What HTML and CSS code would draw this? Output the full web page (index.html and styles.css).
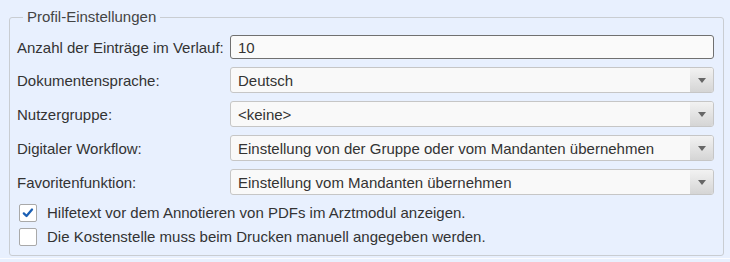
FILE: index.html
```html
<!DOCTYPE html>
<html lang="de">
	<head>
		<meta charset="UTF-8" />
		<meta name="viewport" content="width=device-width, initial-scale=1.0" />
		<title>Profil-Einstellungen</title>
		<link rel="stylesheet" href="styles.css">
	</head>
	<body>
		<div class="page">
			<fieldset class="profile">
				<legend>Profil-Einstellungen</legend>

				<div class="form-grid">
					<label for="history-count">Anzahl der Einträge im Verlauf:</label>
					<input type="text" id="history-count" class="text-field" value="10" />

					<label>Dokumentensprache:</label>
					<div class="select-box">
						<span class="select-value">Deutsch</span>
						<span class="select-arrow"></span>
					</div>

					<label>Nutzergruppe:</label>
					<div class="select-box">
						<span class="select-value">&lt;keine&gt;</span>
						<span class="select-arrow"></span>
					</div>

					<label>Digitaler Workflow:</label>
					<div class="select-box">
						<span class="select-value">Einstellung von der Gruppe oder vom Mandanten übernehmen</span>
						<span class="select-arrow"></span>
					</div>

					<label>Favoritenfunktion:</label>
					<div class="select-box">
						<span class="select-value">Einstellung vom Mandanten übernehmen</span>
						<span class="select-arrow"></span>
					</div>
				</div>

				<div class="checks">
					<label class="check-row">
						<span class="check-box">
							<svg viewBox="0 0 16 16" width="14" height="14">
								<path d="M3.2 8.4 L6.3 11.4 L12.6 4" fill="none" stroke="#1a5fb4" stroke-width="2.6" stroke-linecap="round" stroke-linejoin="round" />
							</svg>
						</span>
						Hilfetext vor dem Annotieren von PDFs im Arztmodul anzeigen.
					</label>
					<label class="check-row">
						<span class="check-box"></span>
						Die Kostenstelle muss beim Drucken manuell angegeben werden.
					</label>
				</div>
			</fieldset>
		</div>
	</body>
</html>
```

FILE: styles.css
```css
body {
	margin: 8px 0 0;
	background: #e8f0fe;
	font-family: 'Liberation Sans', Arial, sans-serif;
	font-size: 15px;
	color: #333;
}

.page {
	padding: 0 7px 2px 9px;
	border-bottom: 1px solid #fbfcff;
}

.profile {
	margin: 0;
	padding: 9px 8px 9px 7px;
	border: 1px solid #c9cdd2;
	border-radius: 3px;
	width: 715px;
	box-sizing: border-box;
}

.profile legend {
	margin-left: 6px;
	padding: 0 4px;
	color: #444;
	line-height: 18px;
}

.form-grid {
	display: grid;
	grid-template-columns: 204px 484px;
	column-gap: 9px;
	row-gap: 8px;
	align-items: center;
}

.form-grid label {
	line-height: 17px;
	white-space: nowrap;
}

.text-field {
	box-sizing: border-box;
	height: 24px;
	width: 100%;
	margin: 0;
	padding: 0 7px;
	border: 1px solid #707070;
	border-radius: 3px;
	background: #fafafa;
	font-family: inherit;
	font-size: 15px;
	color: #333;
	outline: none;
}

.select-box {
	box-sizing: border-box;
	height: 26px;
	display: flex;
	align-items: stretch;
	border: 1px solid #c6c6c6;
	border-radius: 3px;
	background: #f9f9f9;
	overflow: hidden;
}

.select-value {
	flex: 1;
	display: flex;
	align-items: center;
	padding-left: 7px;
	color: #333;
	white-space: nowrap;
}

.select-arrow {
	width: 23px;
	background: linear-gradient(#f2f2f2, #d5d5d5);
	display: flex;
	align-items: center;
	justify-content: center;
}

.select-arrow::after {
	content: '';
	margin-top: 1px;
	border-left: 4px solid transparent;
	border-right: 4px solid transparent;
	border-top: 5px solid #666;
}

.checks {
	margin-top: 9px;
	padding-left: 2px;
	display: flex;
	flex-direction: column;
	gap: 6px;
}

.check-row {
	display: flex;
	align-items: center;
	gap: 10px;
	line-height: 18px;
}

.check-box {
	box-sizing: border-box;
	width: 18px;
	height: 18px;
	border: 1px solid #a9a9a9;
	border-radius: 2px;
	background: #fff;
	display: flex;
	align-items: center;
	justify-content: center;
}
```
